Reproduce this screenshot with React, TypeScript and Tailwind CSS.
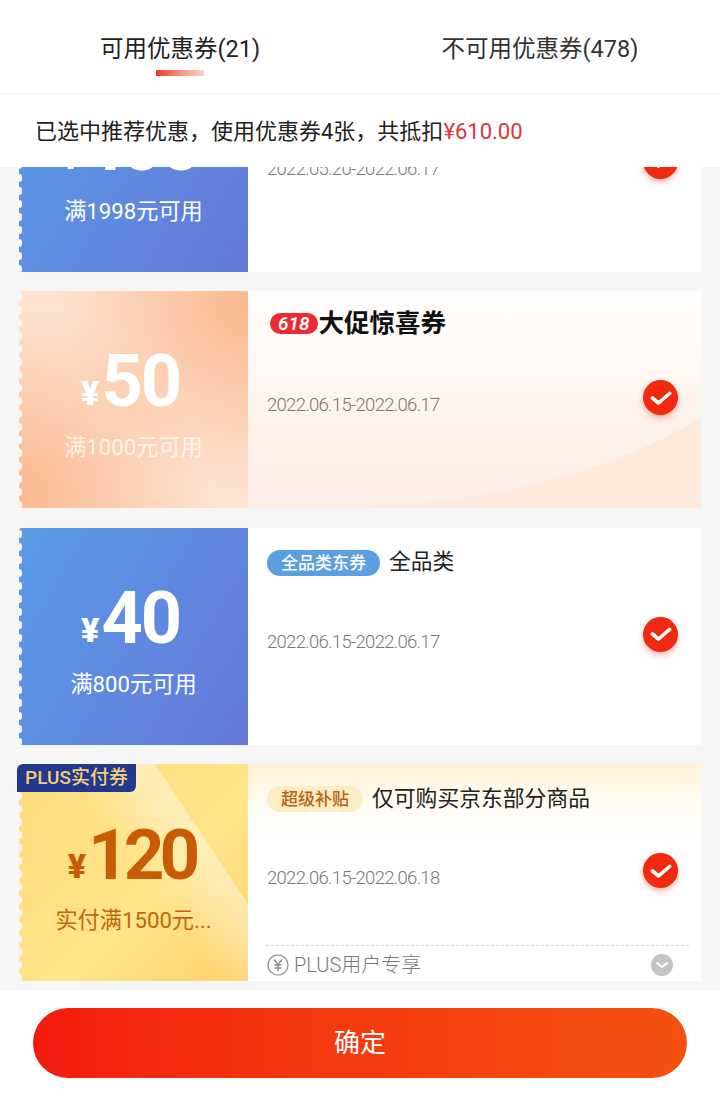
import React from "react";

const sans = "font-['Roboto','Noto_Sans_CJK_SC',sans-serif]";

function Check() {
  return (
    <div className="absolute left-[395px] top-[89px] flex h-[35px] w-[35px] items-center justify-center rounded-full bg-[#f0290f] shadow-[0_3px_6px_rgba(240,41,15,0.35)]">
      <svg width="22" height="16" viewBox="0 0 22 16" fill="none">
        <path d="M2.5 8 L8.5 13 L19.5 3.5" stroke="white" strokeWidth="3.6" strokeLinecap="round" strokeLinejoin="round" />
      </svg>
    </div>
  );
}

function Scallops() {
  return (
    <div className="absolute bottom-0 left-0 top-0 flex w-[4px] flex-col overflow-hidden pt-[2px]">
      {Array.from({ length: 17 }).map((_, i) => (
        <div key={i} className="-ml-[3px] mb-[5px] h-[8px] w-[6px] shrink-0 rounded-full bg-[#f6f6f6]" />
      ))}
    </div>
  );
}

type CardProps = {
  leftClass: string;
  rightClass?: string;
  amount: string;
  sub: string;
  amountColor: string;
  subColor: string;
  date: string;
  head: React.ReactNode;
  extra?: React.ReactNode;
  amountClass?: string;
  back?: React.ReactNode;
};

function Coupon({ leftClass, rightClass, amount, sub, amountColor, subColor, date, head, extra, amountClass, back }: CardProps) {
  return (
    <div className="relative flex h-[217px] w-[682px] shrink-0">
      <div className={`relative flex w-[229px] shrink-0 flex-col items-center overflow-hidden rounded-l-[3px] ${leftClass}`}>
        {extra}
        <Scallops />
        <div className={`relative mt-[51px] flex h-[80px] items-end ${amountColor} ${sans}`}>
          <span className="mb-[9px] mr-[2px] text-[34px] font-black leading-[40px]">¥</span>
          <span className={`font-bold leading-[80px] ${amountClass ?? "text-[72px] tracking-[-2px] pr-[6px]"}`}>{amount}</span>
        </div>
        <div className={`relative mt-[10px] whitespace-nowrap text-[22.2px] leading-[30px] ${subColor} ${sans}`}>{sub}</div>
      </div>
      <div className={`relative flex-1 overflow-hidden pl-[19px] ${rightClass ?? "bg-white"}`}>
        {back}
        <div className="relative mt-[19px] flex h-[32px] items-center">{head}</div>
        <div className={`relative mt-[51px] text-[18.5px] font-light leading-[24px] tracking-[-0.7px] text-[#777] ${sans}`}>{date}</div>
      </div>
      <div className="absolute left-[229px] top-0">
        <Check />
      </div>
    </div>
  );
}

const blueHead = (
  <>
    <span className="rounded-full bg-[#5b9fe0] px-[14px] py-[1px] text-[17px] font-medium leading-[24px] text-white">全品类东券</span>
    <span className="ml-[9px] text-[21.7px] text-[#222]">全品类</span>
  </>
);

export default function App() {
  return (
    <div className={`flex h-[1098px] w-[720px] flex-col overflow-hidden bg-white ${sans}`}>
      <div className="flex h-[94px] shrink-0 border-b border-[#f5f5f5]">
        <div className="flex w-[360px] flex-col items-center pt-[31px]">
          <div className="text-[23.5px] leading-[36px] text-[#222]">可用优惠券(21)</div>
          <div className="mt-[3px] h-[6px] w-[48px] bg-gradient-to-r from-[#e8351f] to-[#f8d5cc]" />
        </div>
        <div className="flex w-[360px] justify-center pt-[31px]">
          <div className="text-[23.5px] leading-[36px] text-[#333]">不可用优惠券(478)</div>
        </div>
      </div>
      <div className="relative z-10 flex h-[73px] shrink-0 items-center bg-white pl-[35px] pt-[2px] text-[22px] text-[#222]">
        已选中推荐优惠，使用优惠券4张，共抵扣<span className="text-[#d9363e]">¥610.00</span>
      </div>
      <div className="h-[823px] shrink-0 overflow-hidden bg-[#f6f6f6] pl-[19px]">
        <div className="-mt-[112.5px] flex flex-col gap-[19.5px]">
          <Coupon
            leftClass="bg-[linear-gradient(120deg,#5a9ce6,#6478d9)]"
            amount="400"
            sub="满1998元可用"
            amountColor="text-white"
            subColor="text-white"
            date="2022.05.20-2022.06.17"
            head={blueHead}
          />
          <Coupon
            leftClass="bg-[radial-gradient(circle_at_100%_5%,#fbb88e_0%,rgba(251,184,142,0)_62%),radial-gradient(circle_at_0%_95%,#fbb88e_0%,rgba(251,184,142,0)_62%),linear-gradient(#fde2d0,#fde2d0)]"
            rightClass="bg-[linear-gradient(180deg,#fffefd_0%,#fffaf7_25%,#fdf2ec_60%,#fdeee5_100%)]"
            amount="50"
            sub="满1000元可用"
            amountColor="text-white"
            subColor="text-white/75"
            date="2022.06.15-2022.06.17"
            back={
              <svg className="absolute bottom-0 left-0" width="453" height="90" viewBox="0 0 453 90">
                <path d="M120 90 C250 80 350 60 453 0 V90 Z" fill="#fdeadd" />
              </svg>
            }
            head={
              <div className="relative -top-[3px] flex items-center">
                <span className="ml-[3px] rounded-full bg-[#ee2a30] px-[8px] text-[19px] font-semibold italic leading-[21px] text-white">618</span>
                <span className="ml-[1px] text-[25.5px] font-bold text-[#111]">大促惊喜券</span>
              </div>
            }
          />
          <Coupon
            leftClass="bg-[linear-gradient(120deg,#5a9ce6,#6478d9)]"
            amount="40"
            sub="满800元可用"
            amountColor="text-white"
            subColor="text-white"
            date="2022.06.15-2022.06.17"
            head={blueHead}
          />
          <div className="relative">
            <Coupon
              leftClass="bg-[linear-gradient(135deg,#fedc7c,#ffe48a_60%,#fdd268)]"
              rightClass="bg-[linear-gradient(180deg,#fff3d6_0%,#fffdf8_22%,#ffffff_35%)]"
              amount="120"
              amountClass="text-[71px] font-black tracking-[-5px] pr-[4px]"
              sub="实付满1500元..."
              amountColor="text-[#c85c05]"
              subColor="text-[#c2660f]"
              date="2022.06.15-2022.06.18"
              head={
                <>
                  <span className="rounded-full bg-[#fdedc4] px-[14px] text-[17px] font-medium leading-[26px] text-[#b5620f]">超级补贴</span>
                  <span className="ml-[9px] text-[21.8px] text-[#222]">仅可购买京东部分商品</span>
                </>
              }
              extra={
                <svg className="absolute left-0 top-0" width="229" height="217" viewBox="0 0 229 217">
                  <defs>
                    <linearGradient id="sheen" x1="0.3" y1="0.6" x2="0.72" y2="0.3">
                      <stop offset="0.45" stopColor="#fff" stopOpacity="0" />
                      <stop offset="1" stopColor="#fff" stopOpacity="0.4" />
                    </linearGradient>
                  </defs>
                  <polygon points="0,0 136,0 229,140 229,217 0,217" fill="url(#sheen)" />
                </svg>
              }
            />
            <div className="absolute left-[-2px] top-0 flex h-[28px] w-[119px] items-center justify-center rounded-br-[6px] rounded-tl-[6px] bg-[#22388e] text-[19px] font-medium text-[#f3cf75]">
              PLUS实付券
            </div>
            <div className="absolute left-[247px] top-[181px] w-[423px] border-t border-dashed border-[#ddd]" />
            <div className="absolute left-[248px] top-[189px] flex w-[406px] items-center">
              <svg width="22" height="22" viewBox="0 0 22 22" fill="none" className="shrink-0">
                <circle cx="11" cy="11" r="10" stroke="#8a8a8a" strokeWidth="1.2" />
                <path d="M7 5.5 L11 10.5 L15 5.5 M11 10.5 V17 M7.5 11 H14.5 M7.5 14 H14.5" stroke="#8a8a8a" strokeWidth="1.4" />
              </svg>
              <span className="ml-[5px] text-[20px] font-light leading-[24px] text-[#777]">PLUS用户专享</span>
              <div className="ml-auto flex h-[22px] w-[22px] items-center justify-center rounded-full bg-[#c4c4c4]">
                <svg width="14" height="8" viewBox="0 0 14 8" fill="none">
                  <path d="M2 2 L7 6 L12 2" stroke="white" strokeWidth="2" strokeLinecap="round" strokeLinejoin="round" />
                </svg>
              </div>
            </div>
          </div>
        </div>
      </div>
      <div className="flex flex-1 justify-center bg-white pt-[18px]">
        <div className="flex h-[70px] w-[654px] items-center justify-center rounded-full bg-gradient-to-r from-[#f4190f] to-[#f4500f] text-[26px] text-white">
          确定
        </div>
      </div>
    </div>
  );
}
